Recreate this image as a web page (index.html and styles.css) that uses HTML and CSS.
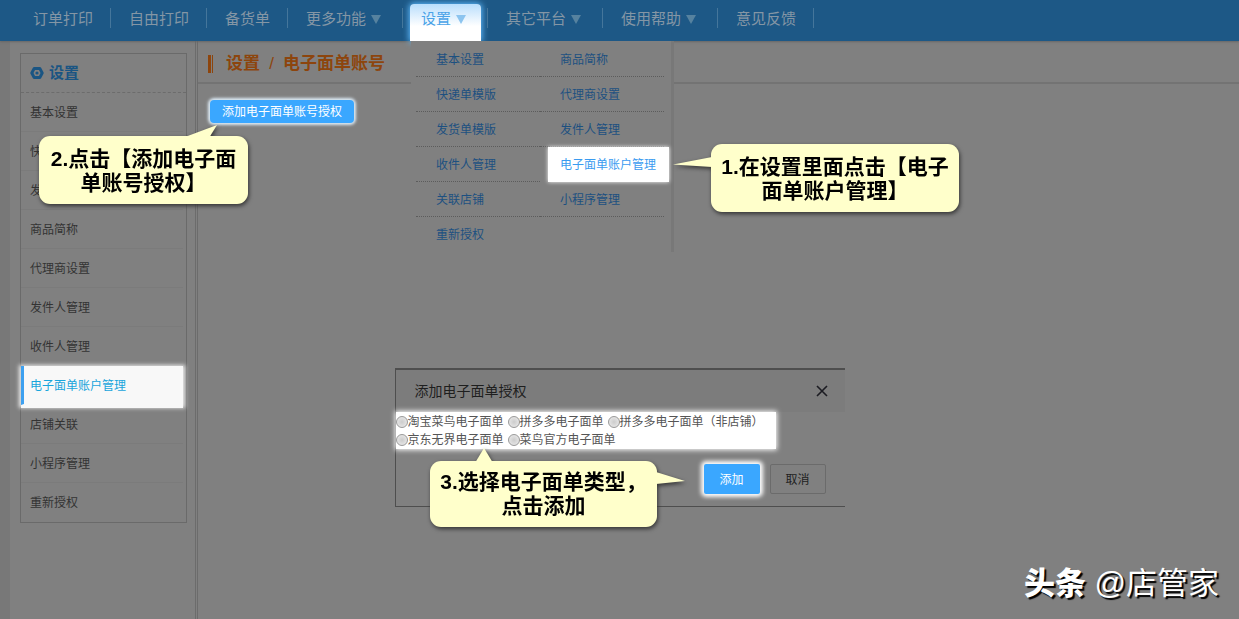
FILE: index.html
```
<!DOCTYPE html>
<html lang="zh-CN">
<head>
    <meta charset="UTF-8">
    <title>设置 / 电子面单账号</title>
    <link rel="stylesheet" href="styles.css">
</head>
<body>
<div class="page">
    <nav class="nav">
        <div class="nav-item"><a href="#">订单打印</a></div>
        <div class="nav-item"><a href="#">自由打印</a></div>
        <div class="nav-item"><a href="#">备货单</a></div>
        <div class="nav-item"><a href="#">更多功能<i class="arrow"></i></a></div>
        <div class="nav-item open">
            <a href="#">设置<i class="arrow"></i></a>
            <div class="dropdown">
                <a href="#">基本设置</a>
                <a href="#">商品简称</a>
                <a href="#">快递单模版</a>
                <a href="#">代理商设置</a>
                <a href="#">发货单模版</a>
                <a href="#">发件人管理</a>
                <a href="#">收件人管理</a>
                <a href="#" class="light">电子面单账户管理</a>
                <a href="#">关联店铺</a>
                <a href="#">小程序管理</a>
                <a href="#">重新授权</a>
            </div>
        </div>
        <div class="nav-item"><a href="#">其它平台<i class="arrow"></i></a></div>
        <div class="nav-item"><a href="#">使用帮助<i class="arrow"></i></a></div>
        <div class="nav-item"><a href="#">意见反馈</a></div>
    </nav>

    <div class="content">
        <aside class="side">
            <div class="side-box">
                <h2 class="side-title">
                    <svg width="14" height="14" viewBox="0 0 14 14">
                        <path d="M4.2 2.4h5.6L12.2 7 9.8 11.6H4.2L1.8 7z" fill="none" stroke="#1a5583" stroke-width="3" stroke-linejoin="round"/>
                        <circle cx="7" cy="7" r="1.6" fill="#1a5583"/>
                    </svg>
                    设置
                </h2>
                <ul class="side-list">
                    <li><a href="#">基本设置</a></li>
                    <li><a href="#">快递单模版</a></li>
                    <li><a href="#">发货单模版</a></li>
                    <li><a href="#">商品简称</a></li>
                    <li><a href="#">代理商设置</a></li>
                    <li><a href="#">发件人管理</a></li>
                    <li><a href="#">收件人管理</a></li>
                    <li class="active"><a href="#">电子面单账户管理</a></li>
                    <li><a href="#">店铺关联</a></li>
                    <li><a href="#">小程序管理</a></li>
                    <li><a href="#">重新授权</a></li>
                </ul>
            </div>
        </aside>
        <main class="main">
            <h1 class="main-title"><i class="mark"></i>设置<span class="slash">/</span>电子面单账号</h1>
            <button type="button" class="add-auth">添加电子面单账号授权</button>
        </main>
    </div>

    <!-- 添加授权弹窗 -->
    <form class="dialog">
        <div class="dialog-head">
            <span>添加电子面单授权</span>
            <button type="button" class="close" aria-label="关闭">
                <svg width="12" height="12" viewBox="0 0 12 12">
                    <path d="M1 1l10 10M11 1L1 11" stroke="#1c1c22" stroke-width="1.6"/>
                </svg>
            </button>
        </div>
        <div class="types">
            <div class="types-row">
                <label><input type="radio" name="type">淘宝菜鸟电子面单</label>
                <label><input type="radio" name="type">拼多多电子面单</label>
                <label><input type="radio" name="type">拼多多电子面单（非店铺）</label>
            </div>
            <div class="types-row">
                <label><input type="radio" name="type">京东无界电子面单</label>
                <label><input type="radio" name="type">菜鸟官方电子面单</label>
            </div>
        </div>
        <div class="dialog-foot">
            <button type="button" class="btn btn-add">添加</button>
            <button type="button" class="btn btn-cancel">取消</button>
        </div>
    </form>

    <!-- 步骤提示 -->
    <div class="tip tip1">
        <svg class="tail" width="40" height="14" viewBox="0 0 40 14"><path d="M40 2L1 9.5L40 12z"/></svg>
        1.在设置里面点击【电子<br>面单账户管理】
    </div>
    <div class="tip tip2">
        <svg class="tail" width="34" height="14" viewBox="0 0 34 14"><path d="M0 13L32 1L24 14H0z"/></svg>
        2.点击【添加电子面<br>单账号授权】
    </div>
    <div class="tip tip3">
        <svg class="tail" width="18" height="16" viewBox="0 0 18 16"><path d="M0 16L9 1L18 16z"/></svg>
        <svg class="tail-right" width="30" height="14" viewBox="0 0 30 14"><path d="M0 1L29 10L0 13z"/></svg>
        3.选择电子面单类型，<br>点击添加
    </div>

    <div class="logo"><b>头条</b> @店管家</div>
</div>
</body>
</html>
```
FILE: styles.css
```
* {
    box-sizing: border-box;
}

body {
    margin: 0;
    background: #808080;
    color: #333;
    font: 12px/18px "Liberation Sans", "Noto Sans CJK SC", sans-serif;
}

a {
    color: inherit;
    text-decoration: none;
}

button {
    padding: 0;
    border: 0;
    font: inherit;
    cursor: pointer;
}

.page {
    position: relative;
    display: flex;
    flex-direction: column;
    min-height: 100vh;
    overflow: hidden;
}

/* 顶部导航 */
.nav {
    display: flex;
    height: 41px;
    padding-left: 15px;
    background: #1d5886;
    color: #8496a5;
    font-size: 15px;
    line-height: 37px;
    white-space: nowrap;
    box-shadow: 0 1px 2px #666;
    position: relative;
    z-index: 2;
}

.nav-item {
    position: relative;
    padding: 0 18px;
}

.nav-item::after {
    content: "";
    position: absolute;
    top: 8px;
    right: 0;
    width: 1px;
    height: 20px;
    background: #45769b;
}

.arrow {
    display: inline-block;
    margin: 0 4px 0 5px;
    border: 5px solid transparent;
    border-top: 9px solid #56829f;
    border-bottom: 0;
}

.open {
    padding: 4px 7px 0;
}

.open > a {
    display: block;
    height: 37px;
    padding: 0 11px;
    border-radius: 4px 4px 0 0;
    background: linear-gradient(#b9defc, #fff 60%);
    box-shadow: 0 0 6px 1px #5fbcff;
    color: #4aa3e8;
    line-height: 30px;
}

.open .arrow {
    border-top-color: #8cc4ef;
}

.dropdown {
    position: absolute;
    top: 41px;
    left: 8px;
    width: 263px;
    padding: 1px 7px 0 5px;
    display: grid;
    grid-template-columns: 1fr 1fr;
    background: #808080;
    border-right: 3px solid #787878;
    color: #1d5080;
    font-size: 12px;
    line-height: 36px;
}

.dropdown a {
    height: 35px;
    padding-left: 20px;
    border-bottom: 1px dotted #5c5c5c;
}

.dropdown a:last-child {
    border-bottom: 0;
}

.dropdown .light {
    margin-left: 8px;
    padding-left: 12px;
    margin-right: -5px;
    background: #fff;
    border-bottom-color: #fff;
    box-shadow: 0 0 4px #fff;
    color: #3a9bf0;
}

.content {
    flex: 1;
    display: flex;
}

/* 左侧菜单 */
.side {
    width: 198px;
    padding: 12px 8px 0 10px;
    border-left: 10px solid #787878;
    border-right: 3px double #6c6c6c;
}

.side-box {
    border: 1px solid #6a6a6a;
}

.side-title {
    display: flex;
    align-items: center;
    gap: 5px;
    height: 39px;
    margin: 0;
    padding-left: 9px;
    border-bottom: 1px dashed #6c6c6c;
    color: #1a5583;
    font-size: 15px;
}

.side-list {
    margin: 0;
    padding: 0;
    list-style: none;
}

.side-list li {
    height: 39px;
    margin-right: 3px;
    padding-left: 9px;
    border-bottom: 1px solid #7b7b7b;
    line-height: 40px;
}

.side-list li:last-child {
    border-bottom: 0;
}

.side-list .active {
    padding-left: 6px;
    border-left: 3px solid #3da0f0;
    border-bottom-color: #f8f8f8;
    background: #f8f8f8;
    box-shadow: 0 3px 0 #f8f8f8, 0 1px 4px 2px #eee;
    color: #18a5dc;
}

/* 右侧内容 */
.main {
    flex: 1;
}

.main-title {
    display: flex;
    align-items: center;
    height: 43px;
    margin: 0;
    padding: 4px 0 0 10px;
    border-bottom: 2px solid #737373;
    color: #8d450d;
    font-size: 17px;
}

.mark {
    width: 5px;
    height: 18px;
    margin-right: 13px;
    border-left: 3px solid #8d450d;
    border-right: 1px solid #8d450d;
}

.slash {
    width: 23px;
    font-weight: normal;
    text-align: center;
}

.add-auth {
    height: 23px;
    margin: 16px 12px;
    padding: 1px 12px 0;
    border-radius: 4px;
    background: #3aa7ff;
    box-shadow: 0 0 3px 2px #dceaf5;
    color: #fff;
}

/* 弹窗 */
.dialog {
    position: absolute;
    top: 368px;
    left: 50%;
    z-index: 3;
    width: 450px;
    margin-left: -225px;
    border: 1px solid #4e4e4e;
    border-width: 2px 0 1px 1px;
}

.dialog-head {
    display: flex;
    justify-content: space-between;
    align-items: center;
    height: 42px;
    padding: 0 17px 0 19px;
    background: #7c7c7c;
    color: #1e1e1e;
    font-size: 14px;
}

.close {
    width: 12px;
    height: 12px;
    background: none;
    line-height: 0;
}

.types {
    width: 380px;
    padding-top: 1px;
    background: #fff;
    box-shadow: 0 0 5px 1px #fff;
    color: #555;
}

.types-row {
    display: flex;
    gap: 4px;
    white-space: nowrap;
}

.types label {
    display: flex;
    align-items: center;
}

.types input {
    appearance: none;
    width: 12px;
    height: 12px;
    margin: 0;
    border: 1px solid #999;
    border-radius: 50%;
    background: radial-gradient(#ccc, #eee);
}

.dialog-foot {
    display: flex;
    justify-content: flex-end;
    gap: 10px;
    padding: 15px 19px 12px;
}

.btn {
    width: 56px;
    height: 30px;
    padding-top: 1px;
    border-radius: 2px;
}

.btn-add {
    background: #3aa7ff;
    box-shadow: 0 0 4px 3px #fff;
    color: #fff;
}

.btn-cancel {
    border: 1px solid #6b6b6b;
    background: none;
    color: #1e1e1e;
}

/* 黄色提示框 */
.tip {
    position: absolute;
    z-index: 4;
    padding: 11px 0 9px;
    border-radius: 11px;
    background: #ffffcb;
    filter: drop-shadow(1px 2px 2px #333);
    color: #000;
    font-size: 21px;
    font-weight: 600;
    line-height: 24px;
    text-align: center;
    white-space: nowrap;
}

.tip path {
    fill: #ffffcb;
}

.tail,
.tail-right {
    position: absolute;
}

.tip1 {
    top: 144px;
    left: 711px;
    width: 248px;
}

.tip1 .tail {
    top: 11px;
    left: -39px;
}

.tip2 {
    top: 136px;
    left: 39px;
    width: 209px;
}

.tip2 .tail {
    top: -12px;
    left: 146px;
}

.tip3 {
    top: 461px;
    left: 430px;
    width: 227px;
    padding: 9px 0;
}

.tip3 .tail {
    top: -14px;
    left: 45px;
}

.tip3 .tail-right {
    top: 10px;
    right: -29px;
}

.logo {
    position: absolute;
    right: 20px;
    bottom: 15px;
    color: #fff;
    font-size: 31px;
    line-height: 40px;
    text-shadow: 2px 2px 1px #000;
}

.logo b {
    font-weight: 900;
}
```
